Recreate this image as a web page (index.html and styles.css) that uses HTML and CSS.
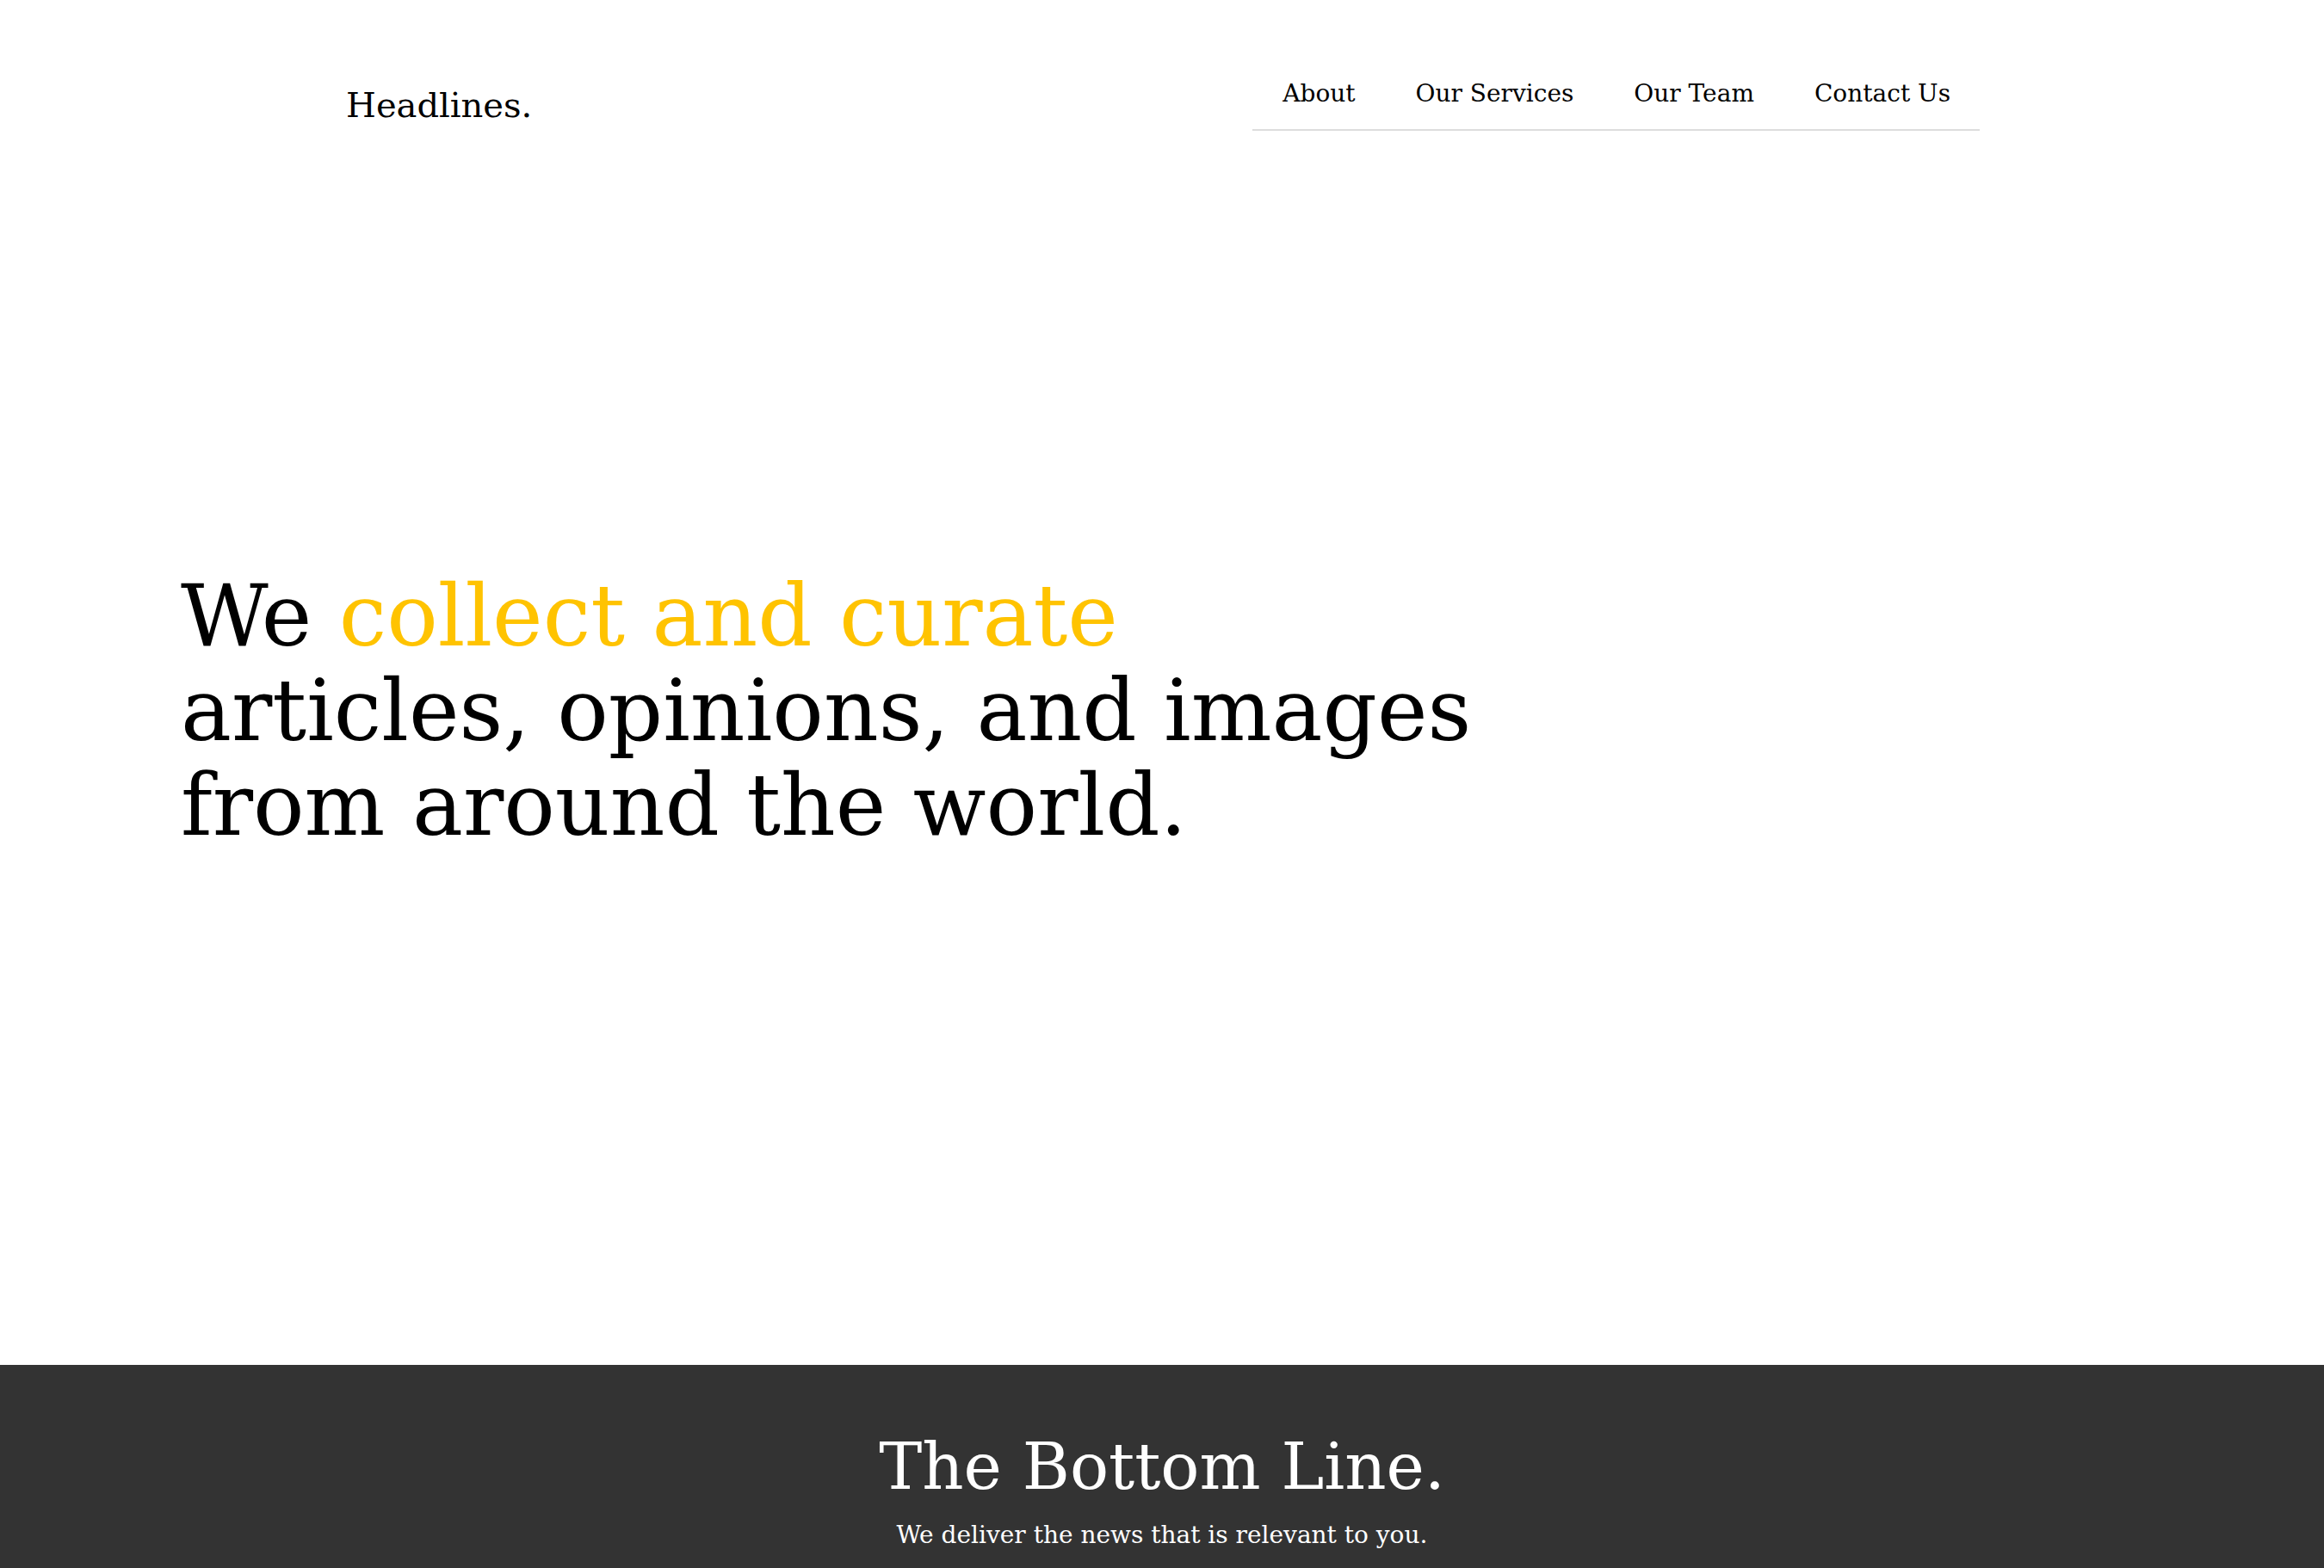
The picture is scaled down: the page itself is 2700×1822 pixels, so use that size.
FILE: index.html
```html
<!DOCTYPE html>
<html lang="en">
<head>
<meta charset="utf-8">
<title>Headlines.</title>
<link rel="stylesheet" href="styles.css">
</head>
<body>
<header class="site-header">
  <div class="logo">Headlines.</div>
  <nav class="main-nav">
    <a href="#" class="nav-link">About</a>
    <a href="#" class="nav-link">Our Services</a>
    <a href="#" class="nav-link">Our Team</a>
    <a href="#" class="nav-link">Contact Us</a>
  </nav>
</header>
<section class="hero">
  <h1 class="hero-title">We <span class="accent">collect and curate</span><br>articles, opinions, and images<br>from around the world.</h1>
</section>
<section class="bottom-line">
  <h2 class="bottom-title">The Bottom Line.</h2>
  <p class="bottom-sub">We deliver the news that is relevant to you.</p>
</section>
</body>
</html>
```

FILE: styles.css
```css
html, body {
  margin: 0;
  padding: 0;
  background: #fff;
  color: #000;
  font-family: "DejaVu Serif", "Liberation Serif", serif;
}

.site-header {
  display: flex;
  justify-content: space-between;
  align-items: flex-start;
  padding: 0 400px;
  height: 160px;
  box-sizing: border-box;
}

.logo {
  font-size: 40px;
  line-height: 60px;
  margin-top: 92px;
  padding-left: 2px;
}

.main-nav {
  display: flex;
  margin-top: 76px;
  border-bottom: 2px solid #dddddd;
}

.nav-link {
  display: block;
  padding: 11px 35px 19px;
  font-size: 28px;
  line-height: 44px;
  color: #000;
  text-decoration: none;
}

.nav-link:last-child {
  padding-right: 34px;
}

.hero {
  height: 1426px;
  display: flex;
  align-items: center;
  padding-left: 210px;
  padding-bottom: 94px;
  box-sizing: border-box;
}

.hero-title {
  margin: 0;
  font-weight: normal;
  font-size: 99px;
  line-height: 110px;
}

.accent {
  color: #ffc300;
}

.bottom-line {
  background: #333333;
  color: #fff;
  text-align: center;
  padding: 68px 0 40px;
}

.bottom-title {
  margin: 0;
  font-weight: normal;
  font-size: 75px;
  line-height: 100px;
}

.bottom-sub {
  margin: 10px 0 0;
  font-size: 28px;
  line-height: 40px;
}
```
